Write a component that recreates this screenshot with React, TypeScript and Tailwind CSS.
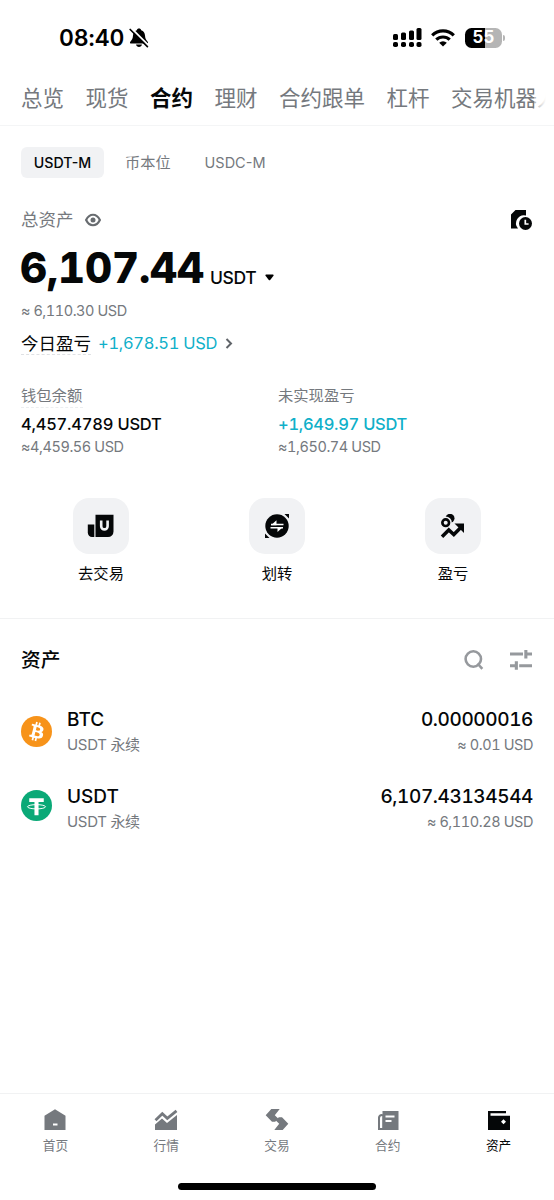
import type { ReactNode } from "react";

const tabs = ["总览", "现货", "合约", "理财", "合约跟单", "杠杆", "交易机器人"];

function StatusBar() {
    return (
        <div className="flex h-[75px] items-center pl-[59px] pr-[48px]">
            <span className="pt-[2px] text-[23px] font-semibold leading-none tracking-[-0.1px] text-black">08:40</span>
            <svg className="ml-[5px] h-5 w-5" viewBox="0 0 20 20">
                <path
                    d="M10 .6c-1.200 0-2 .7-2.200 1.700C5.300 3.200 4.200 5 4 7.500c-.2 3-.9 4.300-2.700 6.200-.7.800-.3 1.800.8 1.800h15.800c1.100 0 1.500-1 .8-1.800-1.800-1.900-2.500-3.200-2.700-6.200-.2-2.500-1.300-4.300-3.800-5.200C12 1.300 11.200.600 10 .6ZM7 16.600h6c-.3 1.500-1.500 2.500-3 2.500s-2.700-1-3-2.500Z"
                />
                <path d="M2.500 .5 20 18" stroke="#fff" strokeWidth="2"/>
                <path d="M1.200 1.500 18.400 18.600" stroke="#000" strokeWidth="1.700" strokeLinecap="round"/>
            </svg>
            <div className="ml-auto flex items-center">
                <svg className="h-5 w-[29px]" viewBox="0 0 29 20">
                    <rect x="0" y="6" width="5" height="6" rx="1.500"/>
                    <rect x="8" y="4.500" width="5" height="7.500" rx="1.500"/>
                    <rect x="16" y="2.500" width="5" height="9.500" rx="1.500"/>
                    <rect x="23.500" y="0" width="5" height="12" rx="1.500"/>
                    <rect x="0" y="14" width="5" height="5" rx="1.800"/>
                    <rect x="8" y="14" width="5" height="5" rx="1.800"/>
                    <rect x="16" y="14" width="5" height="5" rx="1.800"/>
                    <rect x="23.500" y="14" width="5" height="5" rx="1.800"/>
                </svg>
                <svg className="ml-[9px] h-[18px] w-[24px]" viewBox="0 0 24 18">
                    <g fill="none" stroke="#000" strokeWidth="3.200">
                        <path d="M1.200 6.300a15.500 15.500 0 0 1 21.600 0"/>
                        <path d="M5.300 10.700a9.700 9.700 0 0 1 13.400 0"/>
                    </g>
                    <path d="M12 17.500 8.200 13.700a5.400 5.400 0 0 1 7.600 0Z"/>
                </svg>
                <div
                    className="ml-[10px] flex h-5 w-[37px] items-center justify-center rounded-[6.5px] bg-[linear-gradient(90deg,#000_55%,#b5b5b5_55%)]">
                    <span className="text-[17px] font-bold leading-none text-white">55</span>
                </div>
                <div className="ml-[1px] mr-[1px] h-[6px] w-[2px] rounded-r-full bg-[#b5b5b5]"/>
            </div>
        </div>
    );
}

function TopTabs() {
    return (
        <div className="h-[51px] border-b border-[#f4f5f6] pl-[21px] pr-[8px]">
            <div className="relative flex gap-[21.5px] overflow-hidden pt-[7px] text-[21.5px] leading-8">
                {tabs.map((tab) => (
                    <span
                        key={tab}
                        className={tab === "合约" ? "shrink-0 font-bold text-[#050708]" : "shrink-0 text-[#75797e]"}
                    >
                        {tab}
                    </span>
                ))}
                <div className="absolute right-0 top-0 h-full w-3 bg-gradient-to-r from-white/40 to-white"/>
            </div>
        </div>
    );
}

function Summary() {
    return (
        <div className="h-[493px] border-b border-[#f1f2f3]">
            <div className="flex items-center pl-[21px] pt-[21px] text-[14.5px] normal-nums text-[#75797e]">
                <span
                    className="flex h-[31px] w-[83px] items-center justify-center rounded-md bg-[#f1f2f4] pt-px text-[14.2px] font-medium text-[#050708]">
                    USDT-M
                </span>
                <span className="ml-[21px] pt-px text-[15.2px]">币本位</span>
                <span className="ml-[34px] pt-px">USDC-M</span>
            </div>

            <div className="mt-[28px] flex h-7 items-center pl-[21px] pr-[22px]">
                <span className="pt-px text-[17.5px] text-[#75797e]">总资产</span>
                <svg className="ml-[11px] h-4 w-4" viewBox="0 0 16 16" fill="none" stroke="#686c70" strokeWidth="2.200">
                    <path d="M1.100 8C4.600 1 11.400 1 14.900 8 11.400 15 4.600 15 1.100 8Z"/>
                    <circle cx="8" cy="8" r="2.500" fill="#686c70" stroke="none"/>
                </svg>
                <svg className="ml-auto h-5 w-[21px]" viewBox="0 0 21 20" fill="#050708">
                    <path d="M4.500 0H15v5.500A8 8 0 0 0 7 18.500H0V4.500Z"/>
                    <circle cx="14.500" cy="13.500" r="6.500"/>
                    <path d="M14.300 9.800v4.200h3.300" fill="none" stroke="#fff" strokeWidth="1.700"/>
                </svg>
            </div>

            <div className="flex h-[62px] items-baseline pl-[20px] text-[#050708]">
                <span className="text-[42px] font-extrabold leading-[68px] tracking-[-0.15px]">6,107.44</span>
                <span className="ml-[6px] translate-y-px text-[17.5px] font-medium tracking-[-0.4px]">USDT</span>
                <svg className="ml-[9px] h-[7px] w-[9px] -translate-y-[2px]" viewBox="0 0 9 7">
                    <path d="M1 .5h7q1 .5.500 1.300L5.200 6q-.7.700-1.400 0L.5 1.800Q0 1 1 .5Z"/>
                </svg>
            </div>
            <div className="mt-[5px] h-5 pl-[21px] text-[14.5px] leading-5 tracking-[-0.45px] text-[#75797e]">≈ 6,110.30 USD</div>
            <div className="mt-[9px] flex h-[26px] items-center pl-[21px]">
                <span
                    className="h-[24px] border-b border-dashed border-[#dfe1e4] text-[17.5px] leading-[26px] text-[#050708]">今日盈亏</span>
                <span className="ml-[7px] pt-px text-[16.5px] tracking-[-0.3px] text-[#10b0c9]">+1,678.51 USD</span>
                <svg className="ml-[8px] h-[11px] w-[8px]" viewBox="0 0 8 11" fill="none" stroke="#606469"
                     strokeWidth="2">
                    <path d="m1.500 1 4.500 4.500L1.500 10"/>
                </svg>
            </div>

            <div className="mt-[30px] flex pl-[21px]">
                <div className="w-[257px]">
                    <div className="h-[22px] w-[62px] border-b border-dashed border-[#eceef0] text-[15.3px] leading-5 text-[#75797e]">
                        钱包余额
                    </div>
                    <div className="mt-[4px] text-[16.5px] font-medium leading-6 tracking-[-0.22px] text-[#050708]">4,457.4789 USDT</div>
                    <div className="mt-px text-[14.5px] leading-5 tracking-[-0.42px] text-[#75797e]">≈4,459.56 USD</div>
                </div>
                <div>
                    <div className="h-[22px] text-[15.3px] leading-5 text-[#75797e]">未实现盈亏</div>
                    <div className="mt-[4px] text-[16.5px] font-medium leading-6 tracking-[-0.3px] text-[#10b0c9]">+1,649.97 USDT</div>
                    <div className="mt-px text-[14.5px] leading-5 tracking-[-0.42px] text-[#75797e]">≈1,650.74 USD</div>
                </div>
            </div>

            <div className="mt-[41px] grid grid-cols-3 px-[13px]">
                <Action label="去交易">
                    <path d="M8.500 .8h18v16.700a5.500 5.500 0 0 1-5.500 5.500H8.500Z"/>
                    <path d="M.8 10.500h6.500V23H5a4.200 4.200 0 0 1-4.200-4.200Z"/>
                    <path d="M14.200 6.500v5.700a3.200 3.200 0 0 0 6.400 0V6.500" fill="none" stroke="#f1f2f4" strokeWidth="2.600"/>
                </Action>
                <Action label="划转">
                    <circle cx="14" cy="12" r="11.700"/>
                    <path d="M21.500 0H26v4.500ZM2 19.500V24h4.500Z"/>
                    <path d="M8 10.500h12.500M20 13.700H7.500" fill="none" stroke="#fff" strokeWidth="1.500"/>
                    <path d="m8 11.200 5.500-5v5ZM20 13l-5.500 5v-5Z" fill="#fff"/>
                </Action>
                <Action label="盈亏">
                    <circle cx="11" cy="4.300" r="4.500"/>
                    <circle cx="6.700" cy="8.700" r="5.400" fill="#050708" stroke="#f1f2f4" strokeWidth="1.500"/>
                    <circle cx="6.700" cy="8.700" r="2" fill="#f1f2f4"/>
                    <path d="m3 22.700 6.800-6.700 5 4.500 7-7" fill="none" stroke="#050708" strokeWidth="3.500"/>
                    <path d="M15.500 9.500h9.500v9.500Z"/>
                </Action>
            </div>
        </div>
    );
}

function Action({ label, children }: { label: string; children: ReactNode }) {
    return (
        <div className="flex flex-col items-center">
            <div className="flex h-14 w-14 items-center justify-center rounded-2xl bg-[#f1f2f4]">
                <svg className="h-6 w-7" viewBox="0 0 28 24" fill="#050708">{children}</svg>
            </div>
            <span className="mt-[9px] text-[15.3px] leading-[22px] text-[#050708]">{label}</span>
        </div>
    );
}

function AssetRow({ icon, name, amount, value }: { icon: ReactNode; name: string; amount: string; value: string }) {
    return (
        <div className="flex h-[77px] items-start px-[21px]">
            {icon}
            <div className="ml-[15px] pt-px">
                <div className="text-[19px] font-medium leading-7 text-[#050708]">{name}</div>
                <div className="text-[15px] leading-[21px] tracking-[-0.3px] text-[#75797e]">USDT 永续</div>
            </div>
            <div className="ml-auto pt-px text-right">
                <div className="text-[19px] font-medium leading-7 tracking-[-0.38px] text-[#050708]">{amount}</div>
                <div className="text-[14.5px] leading-[21px] tracking-[-0.42px] text-[#75797e]">{value}</div>
            </div>
        </div>
    );
}

function Assets() {
    return (
        <div className="flex-1">
            <div className="mt-[27px] flex h-7 items-center pl-[21px] pr-[22px]">
                <span className="pt-[2px] text-[19.7px] font-medium text-[#050708]">资产</span>
                <svg className="ml-auto h-5 w-5" viewBox="0 0 20 20" fill="none" stroke="#96999d" strokeWidth="2.600">
                    <circle cx="9.300" cy="9" r="7.700"/>
                    <path d="m13.500 13.500 4.800 5.300"/>
                </svg>
                <svg className="ml-[26px] h-5 w-[22px]" viewBox="0 0 22 20" fill="#96999d">
                    <path d="M0 2.500h13v3.100H0ZM14.300 0h3.100v2.500H22v3.100h-4.600v2.900h-3.100ZM0 14.200h4.800v-2.900h3.100v8.500H4.800v-2.500H0ZM9.200 14.200H22v3.100H9.200Z"/>
                </svg>
            </div>
            <div className="mt-[31px]">
                <AssetRow
                    name="BTC"
                    amount="0.00000016"
                    value="≈ 0.01 USD"
                    icon={
                        <svg className="mt-[11px] h-[31px] w-[31px]" viewBox="0 0 32 32">
                            <circle cx="16" cy="16" r="16" fill="#f7931a"/>
                            <path
                                fill="#fff"
                                d="M23.189 14.020c.314-2.096-1.283-3.223-3.465-3.975l.708-2.840-1.728-.430-.690 2.765c-.454-.114-.920-.220-1.385-.326l.695-2.783L15.596 6l-.708 2.839c-.376-.086-.746-.170-1.104-.260l.002-.009-2.384-.595-.460 1.846s1.283.294 1.256.312c.700.175.826.638.805 1.006l-.806 3.235c.048.012.110.030.180.057l-.183-.045-1.130 4.532c-.086.212-.303.531-.793.410.018.025-1.256-.313-1.256-.313l-.858 1.978 2.250.561c.418.105.828.215 1.231.318l-.715 2.872 1.727.430.708-2.840c.472.127.930.245 1.378.357l-.706 2.828 1.728.430.715-2.866c2.948.558 5.164.333 6.097-2.333.752-2.146-.037-3.385-1.588-4.192 1.130-.260 1.980-1.003 2.207-2.538zm-3.950 5.538c-.533 2.147-4.148.986-5.320.695l.950-3.805c1.172.293 4.929.872 4.370 3.110zm.535-5.569c-.487 1.953-3.495.960-4.470.717l.860-3.450c.975.243 4.118.696 3.610 2.733z"
                            />
                        </svg>
                    }
                />
                <AssetRow
                    name="USDT"
                    amount="6,107.43134544"
                    value="≈ 6,110.28 USD"
                    icon={
                        <svg className="mt-[8px] h-[31px] w-[31px]" viewBox="0 0 32 32">
                            <circle cx="16" cy="16" r="16" fill="#0aa977"/>
                            <path d="M8.500 8.500h15v4h-5.400V26h-4.200V12.500H8.500Z" fill="#fff"/>
                            <ellipse cx="16" cy="17.300" rx="9.300" ry="2.200" fill="none" stroke="#fff"/>
                        </svg>
                    }
                />
            </div>
        </div>
    );
}

function NavItem({ label, active, children }: { label: string; active?: boolean; children: ReactNode }) {
    return (
        <div className={`flex flex-col items-center ${active ? "text-[#050708]" : "text-[#75797e]"}`}>
            <svg className="h-6 w-6" viewBox="0 0 24 24" fill="currentColor">{children}</svg>
            <span className="mt-[5px] text-[12.7px] leading-[18px]">{label}</span>
        </div>
    );
}

function BottomNav() {
    return (
        <div className="h-[107px] border-t border-[#f1f2f3]">
            <div className="grid grid-cols-5 pt-[14px]">
                <NavItem label="首页">
                    <path d="m12 1.200 10.500 6.600V22h-21V7.800Z"/>
                    <path d="M10 15.500h4.500v2H10Z" fill="#fff"/>
                </NavItem>
                <NavItem label="行情">
                    <path d="m1 22v-5.500L8 10.500l5 4.500L23 7v15Z"/>
                    <path d="m1.500 12.200 6.800-6.500 5 4.600L22.500 2.800" fill="none" stroke="currentColor" strokeWidth="2.800"/>
                </NavItem>
                <NavItem label="交易">
                    <path d="M6.300 1h8.400L9.800 7.200l3.400 3.300-3 3.300H7L.7 7.300Z"/>
                    <path d="M17.700 22H9.300l4.900-6.200-3.400-3.300 3-3.300H17l6.300 6.500Z"/>
                </NavItem>
                <NavItem label="合约">
                    <path d="M6.500 3H22.500v19H2V9.500a3.500 3.500 0 0 1 4.500-3.300Z"/>
                    <path d="M4 10q0-2 2.200-2v12H4ZM9.500 7.500h9v2h-9ZM9.500 12h6v2h-6Z" fill="#fff"/>
                </NavItem>
                <NavItem label="资产" active>
                    <path d="M1 3h18v2.200H3.500v2.500H23V22H1Z"/>
                    <path d="m16.500 11.300 2.500 2.500-2.500 2.500-2.500-2.500Z" fill="#fff"/>
                </NavItem>
            </div>
            <div className="mx-auto mt-[28px] h-[7px] w-[198px] rounded-full bg-black"/>
        </div>
    );
}

export default function App() {
    return (
        <div
            className="flex h-[1200px] w-[554px] flex-col overflow-hidden bg-white font-['Inter','Noto_Sans_CJK_SC',sans-serif] tabular-nums">
            <StatusBar/>
            <TopTabs/>
            <Summary/>
            <Assets/>
            <BottomNav/>
        </div>
    );
}
